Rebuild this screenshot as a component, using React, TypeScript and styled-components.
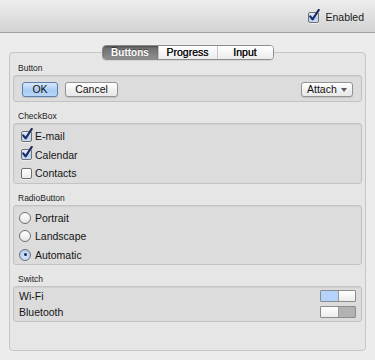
import React, { useState } from "react";
import styled, { createGlobalStyle, css } from "styled-components";

const GlobalStyle = createGlobalStyle`
  html, body {
    margin: 0;
    padding: 0;
    background: #ececec;
  }
  body {
    font-family: "Liberation Sans", Arial, sans-serif;
    color: #1a1a1a;
    -webkit-font-smoothing: antialiased;
  }
`;

const checkItemsList = ["E-mail", "Calendar", "Contacts"];
const radioList = ["Portrait", "Landscape", "Automatic"];
const tabList = [
  { title: "Buttons", width: 55 },
  { title: "Progress", width: 58 },
  { title: "Input", width: 55 },
];

const CheckMark = () => (
  <CheckSvg width="12" height="14" viewBox="0 0 12 14">
    <path
      d="M2.2 7.4 L4.6 10.4 L10.8 0.9"
      fill="none"
      stroke="#1c2c62"
      strokeWidth="2.1"
      strokeLinecap="round"
      strokeLinejoin="round"
    />
  </CheckSvg>
);

const MacCheckbox = ({
  checked,
  label,
  onToggle,
}: {
  checked: boolean;
  label: string;
  onToggle: () => void;
}) => (
  <ItemRow onClick={onToggle}>
    <CheckBoxBox checked={checked}>{checked && <CheckMark />}</CheckBoxBox>
    <ItemText>{label}</ItemText>
  </ItemRow>
);

const App = () => {
  const [enabled, setEnabled] = useState(true);
  const [activeTab, setActiveTab] = useState("Buttons");
  const [checkItems, setCheckItems] = useState<string[]>(["E-mail", "Calendar"]);
  const [orientation, setOrientation] = useState("Automatic");
  const [wifi, setWifi] = useState(true);
  const [bluetooth, setBluetooth] = useState(false);

  const handleCheck = (value: string) => {
    if (checkItems.includes(value)) {
      setCheckItems(checkItems.filter((el) => el !== value));
    } else {
      setCheckItems([...checkItems, value]);
    }
  };

  return (
    <Window>
      <GlobalStyle />
      <Toolbar>
        <EnabledToggle onClick={() => setEnabled(!enabled)}>
          <CheckBoxBox checked={enabled}>{enabled && <CheckMark />}</CheckBoxBox>
          <ToolbarText>Enabled</ToolbarText>
        </EnabledToggle>
      </Toolbar>

      <GroupBox>
        <Tabs>
          {tabList.map((tab) => (
            <Tab
              key={tab.title}
              width={tab.width}
              active={activeTab === tab.title}
              onClick={() => setActiveTab(tab.title)}
            >
              {tab.title}
            </Tab>
          ))}
        </Tabs>

        <SectionLabel first>Button</SectionLabel>
        <ButtonBar>
          <PushButton primary>OK</PushButton>
          <PushButton>Cancel</PushButton>
          <Spacer />
          <PopupButton>
            Attach
            <svg width="6" height="4" viewBox="0 0 6 4">
              <path d="M0 0 L6 0 L3 4 Z" fill="#5a5a5a" />
            </svg>
          </PopupButton>
        </ButtonBar>

        <SectionLabel>CheckBox</SectionLabel>
        <ListBox>
          {checkItemsList.map((item) => (
            <MacCheckbox
              key={item}
              label={item}
              checked={checkItems.includes(item)}
              onToggle={() => handleCheck(item)}
            />
          ))}
        </ListBox>

        <SectionLabel>RadioButton</SectionLabel>
        <ListBox>
          {radioList.map((item) => (
            <ItemRow key={item} onClick={() => setOrientation(item)}>
              <Radio selected={orientation === item} />
              <ItemText>{item}</ItemText>
            </ItemRow>
          ))}
        </ListBox>

        <SectionLabel>Switch</SectionLabel>
        <SwitchBox>
          <SwitchRow>
            <ItemText>Wi-Fi</ItemText>
            <Switch on={wifi} onClick={() => setWifi(!wifi)}>
              <SwitchHalf on={wifi} side="left" />
              <SwitchHalf on={wifi} side="right" />
            </Switch>
          </SwitchRow>
          <SwitchRow>
            <ItemText>Bluetooth</ItemText>
            <Switch on={bluetooth} onClick={() => setBluetooth(!bluetooth)}>
              <SwitchHalf on={bluetooth} side="left" />
              <SwitchHalf on={bluetooth} side="right" />
            </Switch>
          </SwitchRow>
        </SwitchBox>
      </GroupBox>
    </Window>
  );
};

const Window = styled.div`
  width: 375px;
  height: 360px;
  overflow: hidden;
  background: #ececec;
`;

const Toolbar = styled.div`
  height: 32px;
  display: flex;
  align-items: center;
  justify-content: flex-end;
  padding-right: 11px;
  background: linear-gradient(#ededed, #d3d3d3);
  border-bottom: 1px solid #a2a2a2;
`;

const EnabledToggle = styled.div`
  display: flex;
  align-items: center;
  gap: 3px;
  cursor: pointer;
  margin-top: 2px;
`;

const ToolbarText = styled.span`
  font-size: 10.5px;
  line-height: 12px;
`;

const GroupBox = styled.div`
  margin: 19px 9px 0;
  height: 299px;
  box-sizing: border-box;
  border: 1px solid #c6c6c6;
  border-radius: 4px;
  background: #e6e6e6;
  padding: 0 3px;
  display: flex;
  flex-direction: column;
`;

const Tabs = styled.div`
  align-self: center;
  display: flex;
  margin-top: -8px;
  border: 1px solid #8c8c8c;
  border-radius: 4px;
  overflow: hidden;
  box-shadow: 0 1px 0 rgba(0, 0, 0, 0.08);
`;

const Tab = styled.div<{ active?: boolean; width: number }>`
  width: ${({ width }) => width}px;
  height: 13px;
  line-height: 13px;
  text-align: center;
  font-size: 10.5px;
  color: #111;
  background: linear-gradient(#ffffff, #ececec);
  text-shadow: 0 0 0.4px #111;
  cursor: pointer;

  & + & {
    border-left: 1px solid #c8c8c8;
  }

  ${({ active }) =>
    active &&
    css`
      font-size: 10px;
      font-weight: bold;
      color: #ffffff;
      background: linear-gradient(#6c6c6c, #8e8e8e);
      text-shadow: 0 -1px 0 rgba(0, 0, 0, 0.45);
      box-shadow: inset 0 1px 2px rgba(0, 0, 0, 0.35);
    `}
`;

const SectionLabel = styled.div<{ first?: boolean }>`
  font-size: 8.5px;
  line-height: 12px;
  height: 12px;
  color: #222;
  padding-left: 5px;
  margin: ${({ first }) => (first ? "2px 0 1px" : "8px 0 1px")};
`;

const InsetBox = styled.div`
  box-sizing: border-box;
  border: 1px solid #c3c3c3;
  border-radius: 3px;
  background: #dcdcdc;
  box-shadow: inset 0 1px 1px rgba(0, 0, 0, 0.05);
`;

const ButtonBar = styled(InsetBox)`
  display: flex;
  align-items: center;
  gap: 7px;
  padding: 6px 8px 4px;
`;

const Spacer = styled.div`
  flex: 1;
`;

const buttonBase = css`
  box-sizing: border-box;
  height: 15px;
  border-radius: 3px;
  font-family: inherit;
  font-size: 10.5px;
  line-height: 13px;
  color: #111;
  padding: 0;
  box-shadow: 0 1px 1px rgba(0, 0, 0, 0.12);
  cursor: pointer;
`;

const PushButton = styled.button<{ primary?: boolean }>`
  ${buttonBase};
  width: ${({ primary }) => (primary ? "36px" : "53px")};
  border: 1px solid ${({ primary }) => (primary ? "#5b7eae" : "#939393")};
  background: ${({ primary }) =>
    primary
      ? "linear-gradient(#d9e9fc, #a9cbf2 55%, #b8d6f7)"
      : "linear-gradient(#ffffff, #f0f0f0 55%, #e8e8e8)"};
`;

const PopupButton = styled.button`
  ${buttonBase};
  width: 52px;
  border: 1px solid #939393;
  background: linear-gradient(#ffffff, #f0f0f0 55%, #e8e8e8);
  display: flex;
  align-items: center;
  justify-content: space-between;
  padding: 0 5px 0 5px;

  svg {
    margin-top: 1px;
  }
`;

const ListBox = styled(InsetBox)`
  padding: 3px 7px 0;
`;

const ItemRow = styled.div`
  height: 18.5px;
  display: flex;
  align-items: center;
  cursor: pointer;
`;

const ItemText = styled.span`
  font-size: 10.5px;
  line-height: 12px;
  color: #151515;
`;

const CheckBoxBox = styled.span<{ checked: boolean }>`
  position: relative;
  box-sizing: border-box;
  width: 11px;
  height: 11px;
  margin-right: 3px;
  border: 1px solid #6f6f6f;
  border-radius: 2px;
  background: ${({ checked }) =>
    checked
      ? "linear-gradient(#e6f0fb, #b7d2f2 60%, #c9def6)"
      : "linear-gradient(#ffffff, #ececec)"};
  box-shadow: 0 1px 0 rgba(255, 255, 255, 0.5);
  flex-shrink: 0;
`;

const CheckSvg = styled.svg`
  position: absolute;
  left: -1px;
  top: -4px;
`;

const Radio = styled.span<{ selected: boolean }>`
  position: relative;
  box-sizing: border-box;
  width: 12px;
  height: 12px;
  margin: 0 4px 0 -2px;
  border-radius: 50%;
  border: 1px solid #6f6f6f;
  flex-shrink: 0;
  background: ${({ selected }) =>
    selected
      ? "radial-gradient(circle at 50% 65%, #d3e6fb, #a8c8ee)"
      : "linear-gradient(#ffffff, #e6e6e6)"};

  ${({ selected }) =>
    selected &&
    css`
      &::after {
        content: "";
        position: absolute;
        left: 3.5px;
        top: 3.5px;
        width: 3px;
        height: 3px;
        border-radius: 50%;
        background: #1d2a55;
      }
    `}
`;

const SwitchBox = styled(InsetBox)`
  padding: 1px 5px 1px 5px;
`;

const SwitchRow = styled.div`
  height: 16px;
  display: flex;
  align-items: center;
  justify-content: space-between;
`;

const Switch = styled.div<{ on: boolean }>`
  box-sizing: border-box;
  width: 36px;
  height: 12px;
  display: flex;
  border: 1px solid #8c8c8c;
  border-radius: 1px;
  overflow: hidden;
  cursor: pointer;
`;

const SwitchHalf = styled.span<{ on: boolean; side: "left" | "right" }>`
  flex: 1;
  ${({ on, side }) => {
    const isKnob = (on && side === "right") || (!on && side === "left");
    if (isKnob) {
      return css`
        background: linear-gradient(#ffffff, #ececec);
        border-${side === "right" ? "left" : "right"}: 1px solid #9a9a9a;
      `;
    }
    return css`
      background: ${on ? "#b4d4fc" : "#b2b2b2"};
    `;
  }}
`;

export default App;
